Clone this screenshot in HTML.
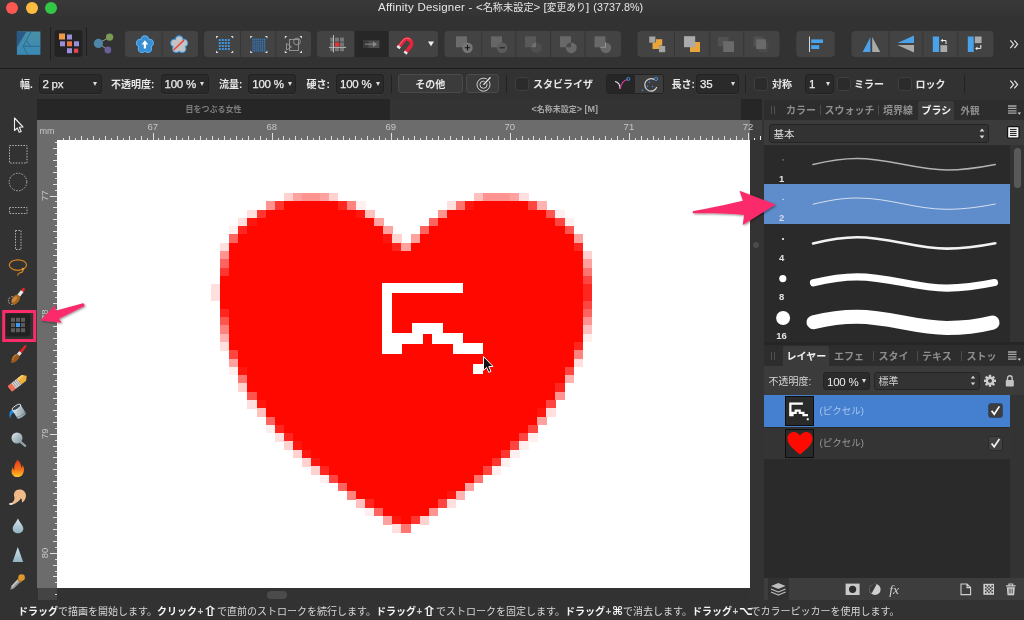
<!DOCTYPE html>
<html lang="ja">
<head>
<meta charset="utf-8">
<title>Affinity Designer</title>
<style>
*{box-sizing:border-box;margin:0;padding:0}
html,body{width:1024px;height:620px;overflow:hidden;background:#323232}
body{position:relative;font-family:"Liberation Sans","Noto Sans CJK JP","DejaVu Sans",sans-serif;color:#e4e4e4;font-size:10px}
.a{position:absolute}
.t{position:absolute;white-space:nowrap;line-height:1}
#titlebar{left:0;top:0;width:1024px;height:17px;background:linear-gradient(#393939,#333)}
#toolbar{left:0;top:17px;width:1024px;height:51px;background:#323232}
#tbline{left:0;top:68px;width:1024px;height:1px;background:#1b1b1b}
#ctx{left:0;top:69px;width:1024px;height:30px;background:#323232}
.grp{position:absolute;top:31px;height:26px;background:#434343;border-radius:4px}
.dv{position:absolute;top:31px;width:1px;height:26px;background:#383838}
.combo{position:absolute;top:74px;height:20px;background:#2a2a2a;border:1px solid #222;border-radius:3px;box-shadow:0 1px 0 #3a3a3a}
.combo span{-webkit-text-stroke:0.25px #ececec;position:absolute;left:3px;top:4.3px;font-size:11.5px;letter-spacing:-0.25px;color:#ececec;line-height:1;white-space:nowrap}
.combo i{position:absolute;right:3.5px;top:7px;width:0;height:0;border-left:2.5px solid transparent;border-right:2.5px solid transparent;border-top:4px solid #ddd}
.lbl{position:absolute;top:79.6px;font-size:10px;font-weight:bold;color:#e8e8e8;line-height:1;white-space:nowrap}
.chk{position:absolute;top:77px;width:14px;height:14px;background:#2b2b2b;border:1px solid #3e3e3e;border-radius:3px}
.btn{position:absolute;top:74px;height:19px;background:#3b3b3b;border:1px solid #4a4a4a;border-radius:3px}
.vsep{position:absolute;top:75px;width:1px;height:18px;background:#222}
#status b{color:#f4f4f4}
#status .k{display:inline-block;text-align:center;font-size:12px;line-height:10px;vertical-align:baseline;font-family:"DejaVu Sans",sans-serif}
#status .pl{display:inline-block;width:7px;text-align:center;color:#cfcfcf}
.ptab{position:absolute;font-size:10px;font-weight:bold;color:#8e8e8e;line-height:1;white-space:nowrap}
</style>
</head>
<body>
<div id="wrap" style="position:absolute;left:0;top:0;width:1024px;height:620px;will-change:transform">
<!-- title bar -->
<div class="a" id="titlebar"></div>
<div class="a" style="left:6px;top:2px;width:12px;height:12px;border-radius:50%;background:#fc5753"></div>
<div class="a" style="left:25.5px;top:2px;width:12px;height:12px;border-radius:50%;background:#fdbc40"></div>
<div class="a" style="left:45px;top:2px;width:12px;height:12px;border-radius:50%;background:#33c748"></div>
<div class="t" id="title" style="left:378px;top:2px;font-size:11.5px;color:#e6e6e6"><span id="t1" style="letter-spacing:0.21px">Affinity Designer - </span><span id="t2">&lt;<span style="font-size:10.2px">名称未設定</span>&gt; </span><span id="t3">[<span style="font-size:9.8px">変更あり</span>] </span><span id="t4" style="font-size:10.8px;margin-left:1px">(3737.8%)</span></div>

<!-- main toolbar -->
<div class="a" id="toolbar"></div>
<div class="a" id="tbline"></div>
<!-- persona group -->
<svg class="a" style="left:0;top:17px" width="1024" height="52" viewBox="0 17 1024 52">
<defs>
<linearGradient id="lg1" x1="0" y1="0" x2="0" y2="1"><stop offset="0" stop-color="#4a8fa6"/><stop offset="1" stop-color="#3889b6"/></linearGradient>
</defs>
<!-- affinity logo -->
<rect x="16.9" y="31.5" width="23.5" height="23.3" fill="url(#lg1)"/>
<polygon points="16.9,31.5 26.5,31.5 16.9,47.4" fill="#2a5a88"/>
<path d="M31.2,31.5 L23.2,46.3 L27.6,54.8 M23.2,46.3 L40.4,46.3 M26.5,40.6 L30.6,46.3" stroke="#2a668e" stroke-width="0.9" fill="none"/>
<rect x="50" y="27" width="1" height="33" fill="#1f1f1f"/>
<rect x="54.5" y="30" width="28" height="27" rx="3.5" fill="#232323"/>
<rect x="59" y="33.5" width="6" height="6" fill="#f19a45"/>
<rect x="67" y="34.5" width="5" height="5" fill="#9a8fd8"/>
<rect x="60" y="41.3" width="5" height="5" fill="#9a8fd8"/>
<rect x="67" y="41.3" width="5" height="5" fill="#f0743c"/>
<rect x="74" y="41.3" width="5" height="5" fill="#9a8fd8"/>
<rect x="67" y="48.2" width="5" height="5" fill="#9a8fd8"/>
<rect x="74" y="48.6" width="4.2" height="4.2" fill="#e8474e"/>
<rect x="86" y="27" width="1" height="29" fill="#1f1f1f"/>
<!-- share -->
<path d="M98.4 43.4 L109.6 37.1 M98.4 43.4 L107.9 50" stroke="#9a9a9a" stroke-width="1"/>
<circle cx="98.4" cy="43.4" r="4.6" fill="#4d85a8"/>
<circle cx="109.6" cy="37.1" r="3.7" fill="#7a9a55"/>
<circle cx="107.9" cy="50" r="3.4" fill="#6b5f9a"/>
<!-- groups -->
<g fill="#434343">
<rect x="125" y="31" width="73" height="26" rx="4"/>
<rect x="204" y="31" width="107" height="26" rx="4"/>
<rect x="317" y="31" width="121" height="26" rx="4"/>
<rect x="444.5" y="31" width="176.5" height="26" rx="4"/>
<rect x="637.5" y="31" width="142" height="26" rx="4"/>
<rect x="796.3" y="31" width="38.4" height="26" rx="4"/>
<rect x="851.5" y="31" width="142" height="26" rx="4"/>
</g>
<rect x="354.4" y="31" width="34.4" height="26" fill="#272727"/>
<g fill="#363636">
<rect x="161.5" y="31" width="1" height="26"/>
<rect x="240" y="31" width="1" height="26"/><rect x="275.2" y="31" width="1" height="26"/>
<rect x="481.2" y="31" width="1" height="26"/><rect x="515.2" y="31" width="1" height="26"/><rect x="550.2" y="31" width="1" height="26"/><rect x="584.4" y="31" width="1" height="26"/>
<rect x="674" y="31" width="1" height="26"/><rect x="709.3" y="31" width="1" height="26"/><rect x="743.2" y="31" width="1" height="26"/>
<rect x="888.4" y="31" width="1" height="26"/><rect x="922.3" y="31" width="1" height="26"/><rect x="957.2" y="31" width="1" height="26"/>
</g>
<!-- flower icons -->
<g fill="#5aaeee"><circle cx="144.90" cy="39.60" r="4.3"/><circle cx="149.66" cy="43.05" r="4.3"/><circle cx="147.84" cy="48.65" r="4.3"/><circle cx="141.96" cy="48.65" r="4.3"/><circle cx="140.14" cy="43.05" r="4.3"/></g>
<g fill="#3a8ed2"><circle cx="144.90" cy="39.60" r="3.2"/><circle cx="149.66" cy="43.05" r="3.2"/><circle cx="147.84" cy="48.65" r="3.2"/><circle cx="141.96" cy="48.65" r="3.2"/><circle cx="140.14" cy="43.05" r="3.2"/><circle cx="144.90" cy="44.60" r="5.2"/></g>
<path d="M144.9,40.2 L148.2,44.6 L146,44.6 L146,48.6 L143.8,48.6 L143.8,44.6 L141.6,44.6 Z" fill="#fff"/>
<g fill="#3d94dc"><circle cx="179.20" cy="39.60" r="4.3"/><circle cx="183.96" cy="43.05" r="4.3"/><circle cx="182.14" cy="48.65" r="4.3"/><circle cx="176.26" cy="48.65" r="4.3"/><circle cx="174.44" cy="43.05" r="4.3"/></g>
<g fill="#c4c4c4"><circle cx="179.20" cy="39.60" r="3.2"/><circle cx="183.96" cy="43.05" r="3.2"/><circle cx="182.14" cy="48.65" r="3.2"/><circle cx="176.26" cy="48.65" r="3.2"/><circle cx="174.44" cy="43.05" r="3.2"/><circle cx="179.20" cy="44.60" r="5.2"/></g>
<path d="M173.4,50.3 L184,40.1" stroke="#e8483c" stroke-width="1.5"/>
<!-- grid icons -->
<path fill="#e2e2e2" d="M216.0,36 h2.5 l-2.5,2.5z M233.2,36 v2.5 l-2.5,-2.5z M216.0,53 v-2.5 l2.5,2.5z M233.2,53 h-2.5 l2.5,-2.5z"/>
<g fill="#3f93df">
<rect x="218.8" y="39" width="2" height="2"/><rect x="221.8" y="39" width="2" height="2"/><rect x="224.8" y="39" width="2" height="2"/><rect x="227.8" y="39" width="2" height="2"/>
<rect x="218.8" y="42" width="2" height="2"/><rect x="221.8" y="42" width="2" height="2"/><rect x="224.8" y="42" width="2" height="2"/><rect x="227.8" y="42" width="2" height="2"/>
<rect x="218.8" y="45" width="2" height="2"/><rect x="221.8" y="45" width="2" height="2"/><rect x="224.8" y="45" width="2" height="2"/><rect x="227.8" y="45" width="2" height="2"/>
<rect x="218.8" y="48" width="2" height="2"/><rect x="221.8" y="48" width="2" height="2"/><rect x="224.8" y="48" width="2" height="2"/><rect x="227.8" y="48" width="2" height="2"/>
</g>
<path fill="#e2e2e2" d="M250.2,36 h2.5 l-2.5,2.5z M267.4,36 v2.5 l-2.5,-2.5z M250.2,53 v-2.5 l2.5,2.5z M267.4,53 h-2.5 l2.5,-2.5z"/>
<rect x="252" y="38.2" width="13.4" height="13.2" fill="#37414b"/>
<g fill="#3f8cd6"><rect x="252.4" y="38.6" width="1.2" height="1.2"/><rect x="252.4" y="40.6" width="1.2" height="1.2"/><rect x="252.4" y="42.5" width="1.2" height="1.2"/><rect x="252.4" y="44.5" width="1.2" height="1.2"/><rect x="252.4" y="46.4" width="1.2" height="1.2"/><rect x="252.4" y="48.4" width="1.2" height="1.2"/><rect x="252.4" y="50.3" width="1.2" height="1.2"/><rect x="254.3" y="38.6" width="1.2" height="1.2"/><rect x="254.3" y="40.6" width="1.2" height="1.2"/><rect x="254.3" y="42.5" width="1.2" height="1.2"/><rect x="254.3" y="44.5" width="1.2" height="1.2"/><rect x="254.3" y="46.4" width="1.2" height="1.2"/><rect x="254.3" y="48.4" width="1.2" height="1.2"/><rect x="254.3" y="50.3" width="1.2" height="1.2"/><rect x="256.3" y="38.6" width="1.2" height="1.2"/><rect x="256.3" y="40.6" width="1.2" height="1.2"/><rect x="256.3" y="42.5" width="1.2" height="1.2"/><rect x="256.3" y="44.5" width="1.2" height="1.2"/><rect x="256.3" y="46.4" width="1.2" height="1.2"/><rect x="256.3" y="48.4" width="1.2" height="1.2"/><rect x="256.3" y="50.3" width="1.2" height="1.2"/><rect x="258.2" y="38.6" width="1.2" height="1.2"/><rect x="258.2" y="40.6" width="1.2" height="1.2"/><rect x="258.2" y="42.5" width="1.2" height="1.2"/><rect x="258.2" y="44.5" width="1.2" height="1.2"/><rect x="258.2" y="46.4" width="1.2" height="1.2"/><rect x="258.2" y="48.4" width="1.2" height="1.2"/><rect x="258.2" y="50.3" width="1.2" height="1.2"/><rect x="260.2" y="38.6" width="1.2" height="1.2"/><rect x="260.2" y="40.6" width="1.2" height="1.2"/><rect x="260.2" y="42.5" width="1.2" height="1.2"/><rect x="260.2" y="44.5" width="1.2" height="1.2"/><rect x="260.2" y="46.4" width="1.2" height="1.2"/><rect x="260.2" y="48.4" width="1.2" height="1.2"/><rect x="260.2" y="50.3" width="1.2" height="1.2"/><rect x="262.1" y="38.6" width="1.2" height="1.2"/><rect x="262.1" y="40.6" width="1.2" height="1.2"/><rect x="262.1" y="42.5" width="1.2" height="1.2"/><rect x="262.1" y="44.5" width="1.2" height="1.2"/><rect x="262.1" y="46.4" width="1.2" height="1.2"/><rect x="262.1" y="48.4" width="1.2" height="1.2"/><rect x="262.1" y="50.3" width="1.2" height="1.2"/><rect x="264.1" y="38.6" width="1.2" height="1.2"/><rect x="264.1" y="40.6" width="1.2" height="1.2"/><rect x="264.1" y="42.5" width="1.2" height="1.2"/><rect x="264.1" y="44.5" width="1.2" height="1.2"/><rect x="264.1" y="46.4" width="1.2" height="1.2"/><rect x="264.1" y="48.4" width="1.2" height="1.2"/><rect x="264.1" y="50.3" width="1.2" height="1.2"/></g>
<path fill="#e2e2e2" d="M284.8,36 h2.5 l-2.5,2.5z M302.0,36 v2.5 l-2.5,-2.5z M284.8,53 v-2.5 l2.5,2.5z M302.0,53 h-2.5 l2.5,-2.5z"/>
<g fill="none" stroke="#9a9a9a" stroke-width="0.9">
<rect x="289.5" y="39.5" width="9" height="11"/>
<circle cx="297" cy="41.5" r="3.4"/>
<path d="M286.5,43.5 v6.5 l5,-3.2z"/>
</g>
<!-- snapping -->
<g fill="#767676">
<rect x="330.3" y="37.6" width="3" height="4"/><rect x="335" y="37.6" width="4" height="4"/><rect x="340" y="37.6" width="4" height="4"/>
<rect x="330.3" y="42.5" width="3" height="4"/><rect x="340" y="42.5" width="4" height="4"/>
<rect x="330.3" y="47.8" width="3" height="3.4"/><rect x="335" y="47.8" width="4" height="3.4"/><rect x="340" y="47.8" width="4" height="3.4"/>
</g>
<rect x="335" y="42.5" width="4.2" height="4" fill="#ee3030"/>
<rect x="333.1" y="35" width="0.8" height="17.5" fill="#d8d8d8"/>
<rect x="329" y="46.9" width="17" height="0.8" fill="#d8d8d8"/>
<!-- force pixel alignment (active, dark) -->
<rect x="363" y="40.4" width="16.4" height="7.6" fill="#4e4e4e"/>
<rect x="363" y="40.4" width="5.5" height="7.6" fill="#3a3a3a"/>
<path d="M365,44.2 h9" stroke="#8a8a8a" stroke-width="1"/>
<path d="M373,41.5 l4,2.7 l-4,2.7z" fill="#8a8a8a"/>
<!-- magnet -->
<g transform="translate(406.5,44.3) rotate(38)">
<path d="M-6.3,7.5 L-6.3,-1 A6.3,6.3 0 0 1 6.3,-1 L6.3,7.5 L2.6,7.5 L2.6,-1 A2.6,2.6 0 0 0 -2.6,-1 L-2.6,7.5 Z" fill="#e8243c"/>
<path d="M-5.2,7.5 L-5.2,-1 A5.2,5.2 0 0 1 0,-6.2" stroke="#f5687a" stroke-width="1" fill="none"/>
<rect x="-6.3" y="5.8" width="3.7" height="2.4" fill="#e6e6e6"/>
<rect x="2.6" y="5.8" width="3.7" height="2.4" fill="#e6e6e6"/>
</g>
<path d="M428,41.6 h6 l-3,4.6z" fill="#f0f0f0"/>
<!-- boolean ops -->
<g>
<rect x="456" y="36.3" width="11" height="11" fill="#6b6b6b"/>
<circle cx="467.5" cy="47.8" r="5.2" fill="#767676"/>
<path d="M464.8,47.8 h5.4 M467.5,45.1 v5.4" stroke="#151515" stroke-width="1.1"/>
<rect x="491" y="36.3" width="11" height="11" fill="#666"/>
<circle cx="502.2" cy="47.8" r="5.2" fill="#5c5c5c"/>
<path d="M499.6,47.8 h5.2" stroke="#1c1c1c" stroke-width="1.1"/>
<rect x="525" y="36.3" width="11" height="11" fill="#595959"/>
<circle cx="536.5" cy="47.8" r="5.4" fill="#4e4e4e"/>
<path d="M531.2,47.3 A5.4,5.4 0 0 1 536,42.4 L536,47.3z" fill="#707070"/>
<rect x="560" y="36.3" width="11" height="11" fill="#686868"/>
<circle cx="571.3" cy="47.8" r="5.4" fill="#686868"/>
<path d="M566,47.3 A5.4,5.4 0 0 1 571,42.4 L571,47.3z" fill="#4a4a4a"/>
<rect x="594.5" y="36.3" width="11" height="11" fill="#686868"/>
<circle cx="605.8" cy="47.8" r="5.4" fill="#686868"/>
<path d="M600.4,47.3 L605.5,47.3 L605.5,42.4" fill="none" stroke="#a8a8a8" stroke-width="0.7"/>
</g>
<!-- arrange -->
<g>
<rect x="649.2" y="36.5" width="6.2" height="6.2" fill="#a4a4a4"/>
<rect x="652.5" y="42.5" width="6.5" height="6.5" fill="#e8a53c"/>
<rect x="656" y="39.2" width="6.2" height="6.5" fill="#e8a53c"/>
<rect x="659" y="46" width="6.2" height="6.2" fill="#a4a4a4"/>
<rect x="690" y="42" width="10" height="10" fill="#e8a53c"/>
<rect x="684" y="36.2" width="11.2" height="11" fill="#ababab"/>
<rect x="718" y="37" width="10.5" height="9.5" fill="#515151"/>
<rect x="723.2" y="41.2" width="10.8" height="10.8" fill="#6a6a6a"/>
<rect x="753.4" y="36.6" width="10" height="10" fill="#505050"/>
<rect x="758.5" y="42" width="10" height="10" fill="#4a4a4a"/>
<rect x="756.2" y="39.3" width="9.8" height="9.8" fill="#6a6a6a"/>
</g>
<!-- align -->
<rect x="809" y="36.5" width="1" height="15.5" fill="#d8d8d8"/>
<rect x="811.2" y="39.4" width="11.8" height="3.6" fill="#4aa3ea"/>
<rect x="811.2" y="45.2" width="8" height="3.8" fill="#4aa3ea"/>
<!-- flip / rotate -->
<path d="M862.7,52 L870.4,37 L870.4,52z" fill="#4aa3ea"/>
<path d="M872.2,37 L872.2,52 L880.2,52z" fill="#aaa"/>
<path d="M897.4,42.9 L914,35.6 L914,42.9z" fill="#4aa3ea"/>
<path d="M897.4,45.1 L914,45.1 L914,52.6z" fill="#aaa"/>
<rect x="932.8" y="36.5" width="6.3" height="15.5" fill="#4aa3ea"/>
<rect x="940.4" y="45.2" width="6.8" height="6.8" fill="#aaa"/>
<path d="M942,40.5 h4 v3.5" stroke="#f0f0f0" stroke-width="1" fill="none"/>
<path d="M940.6,40.5 l2.2,-1.8 v3.6z" fill="#f0f0f0"/>
<rect x="967.8" y="36.5" width="5.9" height="15.5" fill="#4aa3ea"/>
<rect x="974.8" y="36.5" width="6.8" height="6.6" fill="#aaa"/>
<path d="M980.8,45 v3.4 h-4" stroke="#f0f0f0" stroke-width="1" fill="none"/>
<path d="M975.2,48.4 l2.2,-1.8 v3.6z" fill="#f0f0f0"/>
<path d="M1010.3,40.3 l3.3,3.9 l-3.3,3.9 M1014.3,40.3 l3.3,3.9 l-3.3,3.9" stroke="#e0e0e0" stroke-width="1.2" fill="none"/>
</svg>


<!-- context toolbar -->
<div class="a" id="ctx"></div>
<div class="lbl" style="left:20px">幅.</div>
<div class="combo" style="left:38.5px;width:63px"><span>2 px</span><i></i></div>
<div class="lbl" style="left:111px">不透明度:</div>
<div class="combo" style="left:160.5px;width:48px"><span>100 %</span><i></i></div>
<div class="lbl" style="left:219px">流量:</div>
<div class="combo" style="left:248.3px;width:48px"><span>100 %</span><i></i></div>
<div class="lbl" style="left:306.5px">硬さ:</div>
<div class="combo" style="left:336px;width:48px"><span>100 %</span><i></i></div>
<div class="vsep" style="left:391px"></div>
<div class="btn" style="left:398px;width:64.5px"><div class="t" style="left:0;width:100%;text-align:center;top:5px;font-size:10px;font-weight:bold;color:#e8e8e8">その他</div></div>
<div class="btn" style="left:465.5px;width:33px">
<svg class="a" style="left:8px;top:0px" width="18" height="18" viewBox="0 0 18 18"><circle cx="8.5" cy="9.7" r="6.5" fill="none" stroke="#cfcfcf" stroke-width="1"/><circle cx="8.5" cy="9.7" r="3.6" fill="none" stroke="#cfcfcf" stroke-width="1"/><path d="M8.5,9.7 L15.5,2.2" stroke="#3b3b3b" stroke-width="3"/><path d="M8.5,9.7 L15.5,2.2" stroke="#e4e4e4" stroke-width="1.3"/></svg>
</div>
<div class="vsep" style="left:506px"></div>
<div class="chk" style="left:514.5px"></div>
<div class="lbl" style="left:533px">スタビライザ</div>
<div class="a" style="left:606px;top:74px;width:58px;height:19.5px;background:#3c3c3c;border:1px solid #242424;border-radius:3px"></div>
<div class="a" style="left:607px;top:75px;width:28px;height:17.5px;background:#262626;border-radius:2px 0 0 2px"></div>
<svg class="a" style="left:606px;top:74px" width="58" height="20" viewBox="0 0 58 20">
<path d="M9,7.5 C12.5,8 14,11 14.3,15" stroke="#e8e8e8" stroke-width="1.2" fill="none"/>
<path d="M14.3,15 C14.8,10 17,6.5 21.5,5.5" stroke="#e63aa8" stroke-width="1.2" fill="none"/>
<circle cx="22.3" cy="5" r="1.5" fill="none" stroke="#3f97e6" stroke-width="0.9"/>
<path d="M48.5,5.8 A6.2,6.2 0 1 0 50.8,13" stroke="#d0d0d0" stroke-width="1.2" fill="none"/>
<circle cx="50" cy="5" r="1.6" fill="none" stroke="#3f97e6" stroke-width="0.9"/>
<circle cx="43.5" cy="8.2" r="0.8" fill="#3f97e6"/><circle cx="41.5" cy="12.2" r="0.8" fill="#3f97e6"/><circle cx="46.5" cy="12.5" r="0.8" fill="#3f97e6"/><circle cx="36.5" cy="16.2" r="0.8" fill="#3f97e6"/>
</svg>
<div class="lbl" style="left:671.5px">長さ:</div>
<div class="combo" style="left:696px;width:43px"><span>35</span><i></i></div>
<div class="vsep" style="left:745px"></div>
<div class="chk" style="left:754px"></div>
<div class="lbl" style="left:772px">対称</div>
<div class="combo" style="left:805px;width:29px"><span>1</span><i></i></div>
<div class="chk" style="left:837px"></div>
<div class="lbl" style="left:854px">ミラー</div>
<div class="chk" style="left:898px"></div>
<div class="lbl" style="left:915.5px">ロック</div>
<div class="vsep" style="left:964px"></div>
<svg class="a" style="left:1008px;top:79px" width="12" height="12" viewBox="0 0 12 12"><path d="M2.3,1.6 l3.3,3.9 l-3.3,3.9 M6.3,1.6 l3.3,3.9 l-3.3,3.9" stroke="#e0e0e0" stroke-width="1.2" fill="none"/></svg>


<!-- document tabs -->
<div class="a" style="left:37px;top:99px;width:353px;height:21px;background:#262626"></div>
<div class="a" style="left:390px;top:99px;width:351px;height:21px;background:#333"></div>
<div class="a" style="left:741px;top:99px;width:21px;height:21px;background:#262626"></div>
<div class="t" style="left:185.5px;top:105.5px;font-size:8px;font-weight:bold;color:#7e7e7e">目をつぶる女性</div>
<div class="t" style="left:531.5px;top:104.5px;font-size:8px;font-weight:bold;color:#a8a8a8"><span style="font-size:9px">&lt;</span>名称未設定<span style="font-size:9px">&gt; [M]</span></div>

<!-- left tools -->
<div class="a" style="left:0;top:99px;width:37px;height:501px;background:#323232"></div>
<svg class="a" style="left:0;top:99px" width="37" height="501" viewBox="0 99 37 501">
<defs>
<linearGradient id="gsil" x1="0" y1="0" x2="1" y2="1"><stop offset="0" stop-color="#dfe8ec"/><stop offset="1" stop-color="#7f949c"/></linearGradient>
<linearGradient id="gdrop" x1="0" y1="0" x2="0" y2="1"><stop offset="0" stop-color="#d6e6ec"/><stop offset="1" stop-color="#8fb2c0"/></linearGradient>
<linearGradient id="gfl" x1="0" y1="0" x2="0" y2="1"><stop offset="0" stop-color="#e8391c"/><stop offset="0.55" stop-color="#f5701a"/><stop offset="1" stop-color="#fdc92a"/></linearGradient>
</defs>
<!-- move tool -->
<path d="M14.5,118 L14.5,130.5 L17.3,128 L19.2,132.3 L21.2,131.4 L19.3,127.2 L23,127 Z" fill="#2f2f2f" stroke="#ededed" stroke-width="1.1" stroke-linejoin="round"/>
<!-- marquees -->
<g fill="none" stroke="#b4b4b4" stroke-width="1" stroke-dasharray="1.5 1.3">
<rect x="9.5" y="145.5" width="17.5" height="17.5"/>
<circle cx="18" cy="182" r="8.8"/>
<rect x="9.5" y="207.5" width="17.5" height="6"/>
<rect x="15.5" y="230.5" width="5.5" height="19"/>
</g>
<!-- lasso -->
<ellipse cx="17.9" cy="265.1" rx="8.6" ry="5.3" fill="none" stroke="#d98420" stroke-width="1.2"/>
<path d="M23,268.8 C24,272 21,272.5 19.5,273 C18.3,273.4 17.8,274.4 17.5,275.6" fill="none" stroke="#d98420" stroke-width="1.1"/>
<circle cx="22.8" cy="268.8" r="1.1" fill="#f0a838"/>
<!-- selection brush -->
<circle cx="12.3" cy="300.6" r="3.9" fill="none" stroke="#d0d0d0" stroke-width="0.9" stroke-dasharray="1.6 1.2"/>
<g transform="translate(17.6,297) rotate(-52)">
<ellipse cx="-3.2" cy="0" rx="5.6" ry="3.6" fill="#a8671f"/>
<ellipse cx="-3.6" cy="-1" rx="3.6" ry="1.6" fill="#c98a3a"/>
<rect x="2" y="-1.7" width="5.6" height="3.4" fill="#e6e6e6"/>
<path d="M7.6,-1.7 L11,-1.2 L11,1.2 L7.6,1.7z" fill="#e8242c"/>
</g>
<!-- pixel tool (active) -->
<rect x="5.3" y="313.4" width="25" height="23" rx="3" fill="#222"/>
<g fill="#5c5c5c">
<rect x="11" y="317.8" width="4" height="4"/><rect x="16" y="317.8" width="4" height="4"/><rect x="21" y="317.8" width="4" height="4"/>
<rect x="11" y="323" width="4" height="4"/><rect x="21" y="323" width="4" height="4"/>
<rect x="11" y="328.2" width="4" height="4"/><rect x="16" y="328.2" width="4" height="4"/><rect x="21" y="328.2" width="4" height="4"/>
</g>
<rect x="16" y="323" width="4" height="4" fill="#3b9cf5"/>
<!-- paint brush -->
<g transform="translate(18.5,354.5) rotate(-50)">
<path d="M-11,0 C-8,-3.6 -3,-3.4 -0.5,-1.6 L-0.5,1.6 C-3,3.6 -8,3 -11,0z" fill="#9c5a1c"/>
<path d="M-8,-1 C-6,-2.4 -3,-2.4 -1,-1.2" stroke="#c4843a" stroke-width="1" fill="none"/>
<rect x="-0.5" y="-1.7" width="3.8" height="3.4" fill="#e2e2e2"/>
<path d="M3.3,-1.7 L11.5,-1 L12.2,0 L11.5,1 L3.3,1.7z" fill="#e3222a"/>
</g>
<!-- eraser -->
<g transform="translate(18,382.5) rotate(-38)">
<rect x="-10.5" y="-3.6" width="5.5" height="7.2" rx="1" fill="#f0705c"/>
<rect x="-5.5" y="-3.6" width="7" height="7.2" fill="#d8d8d8"/>
<path d="M-4,-3.6v7.2 M-2,-3.6v7.2 M0,-3.6v7.2" stroke="#8e8e8e" stroke-width="0.8"/>
<path d="M1.5,-3.6 L7.5,-3.6 L11,0 L7.5,3.6 L1.5,3.6z" fill="#f0b040"/>
<path d="M1.5,-3.6 L7.5,-3.6 L9,-2 L1.5,-1z" fill="#f8cf70"/>
</g>
<!-- flood fill bucket -->
<path d="M13.6,409.5 C9.5,410 8.6,414 10.2,418.6 C11,415 11.6,413 14.6,412.4z" fill="#1f8fe6"/>
<g transform="translate(18.8,411.2) rotate(-32)">
<path d="M-5,-4.5 L5,-4.5 L5,5 A5,1.8 0 0 1 -5,5z" fill="url(#gsil)"/>
<ellipse cx="0" cy="-4.5" rx="5" ry="1.9" fill="#39434a" stroke="#e8eef0" stroke-width="0.8"/>
<path d="M-5,3.2 A5,1.8 0 0 0 5,3.2" stroke="#6a7c84" stroke-width="0.7" fill="none"/>
</g>
<!-- zoom -->
<path d="M20.6,441.8 L25.2,445.8" stroke="#8ea2aa" stroke-width="2.2" stroke-linecap="round"/>
<circle cx="17" cy="438" r="5.5" fill="url(#gsil)"/>
<!-- burn (flame) -->
<path d="M17.6,459.8 C20.5,462.5 21.5,465.5 21.3,467.8 C22,467.2 22.6,466 22.7,465 C24.6,468 24.6,472 22.2,475 C20.5,477.2 16.5,477.8 14,476.2 C11,474.2 10.8,470 13,467 C13,468.5 13.5,469.5 14.3,470 C13.8,466 15.2,462.5 17.6,459.8z" fill="url(#gfl)"/>
<!-- smudge -->
<path d="M9.2,503.6 C13.5,502.8 15.2,500 14.2,496.2 C13,492 16.5,489 20.5,489.6 C24.5,490.2 27,494 25.6,498 C24.8,500.4 23.4,502 21.8,502.4 C22.2,500.6 22,499 20.8,498.2 C19.4,501.2 15,504.6 9.6,504.8z" fill="#f2bb8a"/>
<path d="M9.2,503.6 L12.5,503 L12.5,504.6 L9.6,504.8z" fill="#eee"/>
<path d="M15,493 l1,1 m1.4,-2.2 l1,1 m-2.8,3 l1,1 m1.6,-2.6 l1,1 m1.2,-3 l1,1" stroke="#d89860" stroke-width="0.7"/>
<!-- blur drop -->
<path d="M17.9,518.4 C19.5,522 23.3,525.4 23.3,528.4 C23.3,531.2 21,533.3 18,533.3 C15,533.3 12.7,531.2 12.7,528.4 C12.7,525.4 16.4,522 17.9,518.4z" fill="url(#gdrop)"/>
<!-- sharpen -->
<path d="M17.8,547 L23.2,562 L12.6,562z" fill="url(#gdrop)"/>
<!-- colour picker -->
<path d="M10.2,589.8 L11.4,586 L17.6,579.6 L20.2,582.2 L13.8,588.4z" fill="#9a9a9a"/>
<path d="M11.4,586 L17.6,579.6 L18.8,580.8 L12.2,587.4z" fill="#c8c8c8"/>
<path d="M17.2,579.4 L20.6,582.8 L22,581.4 L18.6,578z" fill="#b87c1c"/>
<circle cx="21.6" cy="577.6" r="3.3" fill="#dc9a2c"/>
</svg>


<!-- canvas area -->
<div class="a" style="left:37px;top:120px;width:713px;height:20px;background:#6c6c6c"></div>
<div class="a" style="left:37px;top:140px;width:20px;height:448px;background:#6c6c6c"></div>
<div class="a" style="left:57px;top:140px;width:693px;height:448px;background:#fff"></div>
<div class="a" style="left:750px;top:120px;width:14px;height:480px;background:#333"></div>
<div class="a" style="left:750px;top:120px;width:12px;height:20px;background:#3e3e3e"></div>
<div class="a" style="left:762px;top:99px;width:2px;height:46px;background:#2a2a2a"></div>
<div class="a" style="left:37px;top:588px;width:713px;height:12px;background:#323232"></div>
<div class="a" style="left:37.5px;top:588px;width:19.5px;height:12px;background:#444"></div><div class="a" style="left:55px;top:594px;width:2px;height:1px;background:#ddd"></div>
<div class="a" style="left:266.7px;top:591px;width:20.6px;height:7.6px;border-radius:3.8px;background:#4b4b4b"></div>
<div class="a" style="left:753px;top:242px;width:6px;height:6px;border-radius:3px;background:#4a4a4a"></div>
<svg class="a" style="left:0;top:0" width="1024" height="620" viewBox="0 0 1024 620">
<g shape-rendering="crispEdges">
<rect x="283.68" y="193.00" width="9.36" height="8.58" fill="#ffd1cf"/>
<rect x="292.74" y="193.00" width="9.36" height="8.58" fill="#ffa29f"/>
<rect x="301.80" y="193.00" width="18.42" height="8.58" fill="#ff938f"/>
<rect x="319.92" y="193.00" width="9.36" height="8.58" fill="#ffa29f"/>
<rect x="328.98" y="193.00" width="9.36" height="8.58" fill="#ffd1cf"/>
<rect x="464.88" y="193.00" width="9.36" height="8.58" fill="#ffffff"/>
<rect x="473.94" y="193.00" width="9.36" height="8.58" fill="#ffc1bf"/>
<rect x="483.00" y="193.00" width="27.48" height="8.58" fill="#ff938f"/>
<rect x="510.18" y="193.00" width="9.36" height="8.58" fill="#ffa29f"/>
<rect x="519.24" y="193.00" width="9.36" height="8.58" fill="#ffe0df"/>
<rect x="256.50" y="201.28" width="9.36" height="8.58" fill="#ffffff"/>
<rect x="265.56" y="201.28" width="9.36" height="8.58" fill="#ff938f"/>
<rect x="274.62" y="201.28" width="9.36" height="8.58" fill="#fe362f"/>
<rect x="283.68" y="201.28" width="54.66" height="8.58" fill="#fe0800"/>
<rect x="338.04" y="201.28" width="9.36" height="8.58" fill="#fe261f"/>
<rect x="347.10" y="201.28" width="9.36" height="8.58" fill="#fe837f"/>
<rect x="356.16" y="201.28" width="9.36" height="8.58" fill="#fff0ef"/>
<rect x="446.76" y="201.28" width="9.36" height="8.58" fill="#ffe0df"/>
<rect x="455.82" y="201.28" width="9.36" height="8.58" fill="#fe746f"/>
<rect x="464.88" y="201.28" width="9.36" height="8.58" fill="#fe170f"/>
<rect x="473.94" y="201.28" width="54.66" height="8.58" fill="#fe0800"/>
<rect x="528.30" y="201.28" width="9.36" height="8.58" fill="#fe453f"/>
<rect x="537.36" y="201.28" width="9.36" height="8.58" fill="#ffb2af"/>
<rect x="247.44" y="209.56" width="9.36" height="8.58" fill="#ffe0df"/>
<rect x="256.50" y="209.56" width="9.36" height="8.58" fill="#fe362f"/>
<rect x="265.56" y="209.56" width="90.90" height="8.58" fill="#fe0800"/>
<rect x="356.16" y="209.56" width="9.36" height="8.58" fill="#fe170f"/>
<rect x="365.22" y="209.56" width="9.36" height="8.58" fill="#ffc1bf"/>
<rect x="437.70" y="209.56" width="9.36" height="8.58" fill="#ff938f"/>
<rect x="446.76" y="209.56" width="99.96" height="8.58" fill="#fe0800"/>
<rect x="546.42" y="209.56" width="9.36" height="8.58" fill="#fe554f"/>
<rect x="555.48" y="209.56" width="9.36" height="8.58" fill="#fff0ef"/>
<rect x="238.38" y="217.84" width="9.36" height="8.58" fill="#ffe0df"/>
<rect x="247.44" y="217.84" width="9.36" height="8.58" fill="#fe170f"/>
<rect x="256.50" y="217.84" width="118.08" height="8.58" fill="#fe0800"/>
<rect x="374.28" y="217.84" width="9.36" height="8.58" fill="#ffa29f"/>
<rect x="428.64" y="217.84" width="9.36" height="8.58" fill="#fe645f"/>
<rect x="437.70" y="217.84" width="118.08" height="8.58" fill="#fe0800"/>
<rect x="555.48" y="217.84" width="9.36" height="8.58" fill="#fe453f"/>
<rect x="564.54" y="217.84" width="9.36" height="8.58" fill="#fff0ef"/>
<rect x="229.32" y="226.12" width="9.36" height="8.58" fill="#fff0ef"/>
<rect x="238.38" y="226.12" width="9.36" height="8.58" fill="#fe261f"/>
<rect x="247.44" y="226.12" width="136.20" height="8.58" fill="#fe0800"/>
<rect x="383.34" y="226.12" width="9.36" height="8.58" fill="#ffa29f"/>
<rect x="419.58" y="226.12" width="9.36" height="8.58" fill="#fe645f"/>
<rect x="428.64" y="226.12" width="136.20" height="8.58" fill="#fe0800"/>
<rect x="564.54" y="226.12" width="9.36" height="8.58" fill="#fe554f"/>
<rect x="229.32" y="234.40" width="9.36" height="8.58" fill="#fe645f"/>
<rect x="238.38" y="234.40" width="145.26" height="8.58" fill="#fe0800"/>
<rect x="383.34" y="234.40" width="9.36" height="8.58" fill="#fe170f"/>
<rect x="392.40" y="234.40" width="9.36" height="8.58" fill="#ffd1cf"/>
<rect x="410.52" y="234.40" width="9.36" height="8.58" fill="#ffa29f"/>
<rect x="419.58" y="234.40" width="154.32" height="8.58" fill="#fe0800"/>
<rect x="573.60" y="234.40" width="9.36" height="8.58" fill="#ffa29f"/>
<rect x="220.26" y="242.68" width="9.36" height="8.58" fill="#ffe0df"/>
<rect x="229.32" y="242.68" width="163.38" height="8.58" fill="#fe0800"/>
<rect x="392.40" y="242.68" width="9.36" height="8.58" fill="#fe261f"/>
<rect x="401.46" y="242.68" width="9.36" height="8.58" fill="#ffa29f"/>
<rect x="410.52" y="242.68" width="9.36" height="8.58" fill="#fe0800"/>
<rect x="419.58" y="242.68" width="154.32" height="8.58" fill="#fe0800"/>
<rect x="573.60" y="242.68" width="9.36" height="8.58" fill="#fe261f"/>
<rect x="220.26" y="250.96" width="9.36" height="8.58" fill="#ff938f"/>
<rect x="229.32" y="250.96" width="353.64" height="8.58" fill="#fe0800"/>
<rect x="582.66" y="250.96" width="9.36" height="8.58" fill="#ffd1cf"/>
<rect x="220.26" y="259.24" width="9.36" height="8.58" fill="#fe645f"/>
<rect x="229.32" y="259.24" width="353.64" height="8.58" fill="#fe0800"/>
<rect x="582.66" y="259.24" width="9.36" height="8.58" fill="#ffa29f"/>
<rect x="220.26" y="267.52" width="9.36" height="8.58" fill="#fe362f"/>
<rect x="229.32" y="267.52" width="353.64" height="8.58" fill="#fe0800"/>
<rect x="582.66" y="267.52" width="9.36" height="8.58" fill="#fe746f"/>
<rect x="220.26" y="275.80" width="9.36" height="8.58" fill="#fe0800"/>
<rect x="229.32" y="275.80" width="353.64" height="8.58" fill="#fe0800"/>
<rect x="582.66" y="275.80" width="9.36" height="8.58" fill="#fe453f"/>
<rect x="211.20" y="284.08" width="9.36" height="8.58" fill="#ffe0df"/>
<rect x="220.26" y="284.08" width="362.70" height="8.58" fill="#fe0800"/>
<rect x="582.66" y="284.08" width="9.36" height="8.58" fill="#fe261f"/>
<rect x="211.20" y="292.36" width="9.36" height="8.58" fill="#ffe0df"/>
<rect x="220.26" y="292.36" width="362.70" height="8.58" fill="#fe0800"/>
<rect x="582.66" y="292.36" width="9.36" height="8.58" fill="#fe261f"/>
<rect x="220.26" y="300.64" width="362.70" height="8.58" fill="#fe0800"/>
<rect x="582.66" y="300.64" width="9.36" height="8.58" fill="#fe453f"/>
<rect x="220.26" y="308.92" width="9.36" height="8.58" fill="#fe261f"/>
<rect x="229.32" y="308.92" width="353.64" height="8.58" fill="#fe0800"/>
<rect x="582.66" y="308.92" width="9.36" height="8.58" fill="#fe645f"/>
<rect x="220.26" y="317.20" width="9.36" height="8.58" fill="#fe554f"/>
<rect x="229.32" y="317.20" width="353.64" height="8.58" fill="#fe0800"/>
<rect x="582.66" y="317.20" width="9.36" height="8.58" fill="#ff938f"/>
<rect x="220.26" y="325.48" width="9.36" height="8.58" fill="#fe837f"/>
<rect x="229.32" y="325.48" width="353.64" height="8.58" fill="#fe0800"/>
<rect x="582.66" y="325.48" width="9.36" height="8.58" fill="#ffc1bf"/>
<rect x="220.26" y="333.76" width="9.36" height="8.58" fill="#ffb2af"/>
<rect x="229.32" y="333.76" width="353.64" height="8.58" fill="#fe0800"/>
<rect x="582.66" y="333.76" width="9.36" height="8.58" fill="#fff0ef"/>
<rect x="220.26" y="342.04" width="9.36" height="8.58" fill="#ffe0df"/>
<rect x="229.32" y="342.04" width="344.58" height="8.58" fill="#fe0800"/>
<rect x="573.60" y="342.04" width="9.36" height="8.58" fill="#fe261f"/>
<rect x="229.32" y="350.32" width="9.36" height="8.58" fill="#fe453f"/>
<rect x="238.38" y="350.32" width="335.52" height="8.58" fill="#fe0800"/>
<rect x="573.60" y="350.32" width="9.36" height="8.58" fill="#fe837f"/>
<rect x="229.32" y="358.60" width="9.36" height="8.58" fill="#ffa29f"/>
<rect x="238.38" y="358.60" width="335.52" height="8.58" fill="#fe0800"/>
<rect x="573.60" y="358.60" width="9.36" height="8.58" fill="#ffe0df"/>
<rect x="229.32" y="366.88" width="9.36" height="8.58" fill="#fff0ef"/>
<rect x="238.38" y="366.88" width="9.36" height="8.58" fill="#fe170f"/>
<rect x="247.44" y="366.88" width="317.40" height="8.58" fill="#fe0800"/>
<rect x="564.54" y="366.88" width="9.36" height="8.58" fill="#fe453f"/>
<rect x="238.38" y="375.16" width="9.36" height="8.58" fill="#fe746f"/>
<rect x="247.44" y="375.16" width="317.40" height="8.58" fill="#fe0800"/>
<rect x="564.54" y="375.16" width="9.36" height="8.58" fill="#ffb2af"/>
<rect x="238.38" y="383.44" width="9.36" height="8.58" fill="#ffd1cf"/>
<rect x="247.44" y="383.44" width="308.34" height="8.58" fill="#fe0800"/>
<rect x="555.48" y="383.44" width="9.36" height="8.58" fill="#fe261f"/>
<rect x="564.54" y="383.44" width="9.36" height="8.58" fill="#ffffff"/>
<rect x="247.44" y="391.72" width="9.36" height="8.58" fill="#fe554f"/>
<rect x="256.50" y="391.72" width="299.28" height="8.58" fill="#fe0800"/>
<rect x="555.48" y="391.72" width="9.36" height="8.58" fill="#ff938f"/>
<rect x="247.44" y="400.00" width="9.36" height="8.58" fill="#ffe0df"/>
<rect x="256.50" y="400.00" width="9.36" height="8.58" fill="#fe170f"/>
<rect x="265.56" y="400.00" width="281.16" height="8.58" fill="#fe0800"/>
<rect x="546.42" y="400.00" width="9.36" height="8.58" fill="#fe453f"/>
<rect x="256.50" y="408.28" width="9.36" height="8.58" fill="#ffc1bf"/>
<rect x="265.56" y="408.28" width="272.10" height="8.58" fill="#fe0800"/>
<rect x="537.36" y="408.28" width="9.36" height="8.58" fill="#fe170f"/>
<rect x="546.42" y="408.28" width="9.36" height="8.58" fill="#ffe0df"/>
<rect x="265.56" y="416.56" width="9.36" height="8.58" fill="#fe645f"/>
<rect x="274.62" y="416.56" width="263.04" height="8.58" fill="#fe0800"/>
<rect x="537.36" y="416.56" width="9.36" height="8.58" fill="#ffa29f"/>
<rect x="265.56" y="424.84" width="9.36" height="8.58" fill="#fff0ef"/>
<rect x="274.62" y="424.84" width="9.36" height="8.58" fill="#fe261f"/>
<rect x="283.68" y="424.84" width="244.92" height="8.58" fill="#fe0800"/>
<rect x="528.30" y="424.84" width="9.36" height="8.58" fill="#fe453f"/>
<rect x="274.62" y="433.12" width="9.36" height="8.58" fill="#ffe0df"/>
<rect x="283.68" y="433.12" width="9.36" height="8.58" fill="#fe261f"/>
<rect x="292.74" y="433.12" width="226.80" height="8.58" fill="#fe0800"/>
<rect x="519.24" y="433.12" width="9.36" height="8.58" fill="#fe453f"/>
<rect x="528.30" y="433.12" width="9.36" height="8.58" fill="#fff0ef"/>
<rect x="283.68" y="441.40" width="9.36" height="8.58" fill="#ffd1cf"/>
<rect x="292.74" y="441.40" width="9.36" height="8.58" fill="#fe170f"/>
<rect x="301.80" y="441.40" width="208.68" height="8.58" fill="#fe0800"/>
<rect x="510.18" y="441.40" width="9.36" height="8.58" fill="#fe453f"/>
<rect x="519.24" y="441.40" width="9.36" height="8.58" fill="#fff0ef"/>
<rect x="292.74" y="449.68" width="9.36" height="8.58" fill="#ffd1cf"/>
<rect x="301.80" y="449.68" width="9.36" height="8.58" fill="#fe170f"/>
<rect x="310.86" y="449.68" width="190.56" height="8.58" fill="#fe0800"/>
<rect x="501.12" y="449.68" width="9.36" height="8.58" fill="#fe362f"/>
<rect x="510.18" y="449.68" width="9.36" height="8.58" fill="#fff0ef"/>
<rect x="301.80" y="457.96" width="9.36" height="8.58" fill="#ffd1cf"/>
<rect x="310.86" y="457.96" width="9.36" height="8.58" fill="#fe170f"/>
<rect x="319.92" y="457.96" width="172.44" height="8.58" fill="#fe0800"/>
<rect x="492.06" y="457.96" width="9.36" height="8.58" fill="#fe362f"/>
<rect x="501.12" y="457.96" width="9.36" height="8.58" fill="#fff0ef"/>
<rect x="310.86" y="466.24" width="9.36" height="8.58" fill="#ffd1cf"/>
<rect x="319.92" y="466.24" width="9.36" height="8.58" fill="#fe261f"/>
<rect x="328.98" y="466.24" width="154.32" height="8.58" fill="#fe0800"/>
<rect x="483.00" y="466.24" width="9.36" height="8.58" fill="#fe453f"/>
<rect x="492.06" y="466.24" width="9.36" height="8.58" fill="#fff0ef"/>
<rect x="319.92" y="474.52" width="9.36" height="8.58" fill="#fff0ef"/>
<rect x="328.98" y="474.52" width="9.36" height="8.58" fill="#fe453f"/>
<rect x="338.04" y="474.52" width="136.20" height="8.58" fill="#fe0800"/>
<rect x="473.94" y="474.52" width="9.36" height="8.58" fill="#fe746f"/>
<rect x="338.04" y="482.80" width="9.36" height="8.58" fill="#fe645f"/>
<rect x="347.10" y="482.80" width="118.08" height="8.58" fill="#fe0800"/>
<rect x="464.88" y="482.80" width="9.36" height="8.58" fill="#ffa29f"/>
<rect x="347.10" y="491.08" width="9.36" height="8.58" fill="#fe837f"/>
<rect x="356.16" y="491.08" width="90.90" height="8.58" fill="#fe0800"/>
<rect x="446.76" y="491.08" width="9.36" height="8.58" fill="#fe170f"/>
<rect x="455.82" y="491.08" width="9.36" height="8.58" fill="#ffb2af"/>
<rect x="356.16" y="499.36" width="9.36" height="8.58" fill="#ffc1bf"/>
<rect x="365.22" y="499.36" width="9.36" height="8.58" fill="#fe261f"/>
<rect x="374.28" y="499.36" width="63.72" height="8.58" fill="#fe0800"/>
<rect x="437.70" y="499.36" width="9.36" height="8.58" fill="#fe453f"/>
<rect x="446.76" y="499.36" width="9.36" height="8.58" fill="#ffe0df"/>
<rect x="365.22" y="507.64" width="9.36" height="8.58" fill="#fff0ef"/>
<rect x="374.28" y="507.64" width="9.36" height="8.58" fill="#fe645f"/>
<rect x="383.34" y="507.64" width="36.54" height="8.58" fill="#fe0800"/>
<rect x="419.58" y="507.64" width="9.36" height="8.58" fill="#fe0800"/>
<rect x="428.64" y="507.64" width="9.36" height="8.58" fill="#ff938f"/>
<rect x="383.34" y="515.92" width="9.36" height="8.58" fill="#ffa29f"/>
<rect x="392.40" y="515.92" width="9.36" height="8.58" fill="#fe170f"/>
<rect x="401.46" y="515.92" width="9.36" height="8.58" fill="#fe0800"/>
<rect x="410.52" y="515.92" width="9.36" height="8.58" fill="#fe362f"/>
<rect x="419.58" y="515.92" width="9.36" height="8.58" fill="#ffd1cf"/>
<rect x="392.40" y="524.20" width="9.36" height="8.58" fill="#ffe0df"/>
<rect x="401.46" y="524.20" width="9.36" height="8.58" fill="#fe746f"/>
<rect x="410.52" y="524.20" width="9.36" height="8.58" fill="#ffffff"/>
<rect x="382.05" y="283.00" width="80.80" height="10.27" fill="#fff"/>
<rect x="382.05" y="293.07" width="10.27" height="10.27" fill="#fff"/>
<rect x="382.05" y="303.15" width="10.27" height="10.27" fill="#fff"/>
<rect x="382.05" y="313.23" width="10.27" height="10.27" fill="#fff"/>
<rect x="382.05" y="323.30" width="10.27" height="10.27" fill="#fff"/>
<rect x="412.28" y="323.30" width="30.42" height="10.27" fill="#fff"/>
<rect x="382.05" y="333.38" width="40.50" height="10.27" fill="#fff"/>
<rect x="432.43" y="333.38" width="30.42" height="10.27" fill="#fff"/>
<rect x="382.05" y="343.45" width="20.35" height="10.27" fill="#fff"/>
<rect x="452.57" y="343.45" width="30.42" height="10.27" fill="#fff"/>
<rect x="472.73" y="363.60" width="10.27" height="10.27" fill="#fff"/>
</g>
<g font-family="Liberation Sans, sans-serif" font-size="9.5" fill="#c6c6c6">
<rect x="63" y="138" width="1" height="2" fill="#e0e0e0"/>
<rect x="69" y="136" width="1" height="4" fill="#e0e0e0"/>
<rect x="75" y="138" width="1" height="2" fill="#e0e0e0"/>
<rect x="81" y="136" width="1" height="4" fill="#e0e0e0"/>
<rect x="87" y="138" width="1" height="2" fill="#e0e0e0"/>
<rect x="93" y="136" width="1" height="4" fill="#e0e0e0"/>
<rect x="99" y="138" width="1" height="2" fill="#e0e0e0"/>
<rect x="105" y="136" width="1" height="4" fill="#e0e0e0"/>
<rect x="111" y="138" width="1" height="2" fill="#e0e0e0"/>
<rect x="117" y="136" width="1" height="4" fill="#e0e0e0"/>
<rect x="123" y="138" width="1" height="2" fill="#e0e0e0"/>
<rect x="129" y="136" width="1" height="4" fill="#e0e0e0"/>
<rect x="135" y="138" width="1" height="2" fill="#e0e0e0"/>
<rect x="141" y="136" width="1" height="4" fill="#e0e0e0"/>
<rect x="147" y="138" width="1" height="2" fill="#e0e0e0"/>
<rect x="153" y="133" width="1" height="7" fill="#e0e0e0"/>
<rect x="158" y="138" width="1" height="2" fill="#e0e0e0"/>
<rect x="164" y="136" width="1" height="4" fill="#e0e0e0"/>
<rect x="170" y="138" width="1" height="2" fill="#e0e0e0"/>
<rect x="176" y="136" width="1" height="4" fill="#e0e0e0"/>
<rect x="182" y="138" width="1" height="2" fill="#e0e0e0"/>
<rect x="188" y="136" width="1" height="4" fill="#e0e0e0"/>
<rect x="194" y="138" width="1" height="2" fill="#e0e0e0"/>
<rect x="200" y="136" width="1" height="4" fill="#e0e0e0"/>
<rect x="206" y="138" width="1" height="2" fill="#e0e0e0"/>
<rect x="212" y="136" width="1" height="4" fill="#e0e0e0"/>
<rect x="218" y="138" width="1" height="2" fill="#e0e0e0"/>
<rect x="224" y="136" width="1" height="4" fill="#e0e0e0"/>
<rect x="230" y="138" width="1" height="2" fill="#e0e0e0"/>
<rect x="236" y="136" width="1" height="4" fill="#e0e0e0"/>
<rect x="242" y="138" width="1" height="2" fill="#e0e0e0"/>
<rect x="248" y="136" width="1" height="4" fill="#e0e0e0"/>
<rect x="254" y="138" width="1" height="2" fill="#e0e0e0"/>
<rect x="260" y="136" width="1" height="4" fill="#e0e0e0"/>
<rect x="266" y="138" width="1" height="2" fill="#e0e0e0"/>
<rect x="272" y="133" width="1" height="7" fill="#e0e0e0"/>
<rect x="278" y="138" width="1" height="2" fill="#e0e0e0"/>
<rect x="283" y="136" width="1" height="4" fill="#e0e0e0"/>
<rect x="289" y="138" width="1" height="2" fill="#e0e0e0"/>
<rect x="295" y="136" width="1" height="4" fill="#e0e0e0"/>
<rect x="301" y="138" width="1" height="2" fill="#e0e0e0"/>
<rect x="307" y="136" width="1" height="4" fill="#e0e0e0"/>
<rect x="313" y="138" width="1" height="2" fill="#e0e0e0"/>
<rect x="319" y="136" width="1" height="4" fill="#e0e0e0"/>
<rect x="325" y="138" width="1" height="2" fill="#e0e0e0"/>
<rect x="331" y="136" width="1" height="4" fill="#e0e0e0"/>
<rect x="337" y="138" width="1" height="2" fill="#e0e0e0"/>
<rect x="343" y="136" width="1" height="4" fill="#e0e0e0"/>
<rect x="349" y="138" width="1" height="2" fill="#e0e0e0"/>
<rect x="355" y="136" width="1" height="4" fill="#e0e0e0"/>
<rect x="361" y="138" width="1" height="2" fill="#e0e0e0"/>
<rect x="367" y="136" width="1" height="4" fill="#e0e0e0"/>
<rect x="373" y="138" width="1" height="2" fill="#e0e0e0"/>
<rect x="379" y="136" width="1" height="4" fill="#e0e0e0"/>
<rect x="385" y="138" width="1" height="2" fill="#e0e0e0"/>
<rect x="391" y="133" width="1" height="7" fill="#e0e0e0"/>
<rect x="397" y="138" width="1" height="2" fill="#e0e0e0"/>
<rect x="403" y="136" width="1" height="4" fill="#e0e0e0"/>
<rect x="408" y="138" width="1" height="2" fill="#e0e0e0"/>
<rect x="414" y="136" width="1" height="4" fill="#e0e0e0"/>
<rect x="420" y="138" width="1" height="2" fill="#e0e0e0"/>
<rect x="426" y="136" width="1" height="4" fill="#e0e0e0"/>
<rect x="432" y="138" width="1" height="2" fill="#e0e0e0"/>
<rect x="438" y="136" width="1" height="4" fill="#e0e0e0"/>
<rect x="444" y="138" width="1" height="2" fill="#e0e0e0"/>
<rect x="450" y="136" width="1" height="4" fill="#e0e0e0"/>
<rect x="456" y="138" width="1" height="2" fill="#e0e0e0"/>
<rect x="462" y="136" width="1" height="4" fill="#e0e0e0"/>
<rect x="468" y="138" width="1" height="2" fill="#e0e0e0"/>
<rect x="474" y="136" width="1" height="4" fill="#e0e0e0"/>
<rect x="480" y="138" width="1" height="2" fill="#e0e0e0"/>
<rect x="486" y="136" width="1" height="4" fill="#e0e0e0"/>
<rect x="492" y="138" width="1" height="2" fill="#e0e0e0"/>
<rect x="498" y="136" width="1" height="4" fill="#e0e0e0"/>
<rect x="504" y="138" width="1" height="2" fill="#e0e0e0"/>
<rect x="510" y="133" width="1" height="7" fill="#e0e0e0"/>
<rect x="516" y="138" width="1" height="2" fill="#e0e0e0"/>
<rect x="522" y="136" width="1" height="4" fill="#e0e0e0"/>
<rect x="528" y="138" width="1" height="2" fill="#e0e0e0"/>
<rect x="533" y="136" width="1" height="4" fill="#e0e0e0"/>
<rect x="539" y="138" width="1" height="2" fill="#e0e0e0"/>
<rect x="545" y="136" width="1" height="4" fill="#e0e0e0"/>
<rect x="551" y="138" width="1" height="2" fill="#e0e0e0"/>
<rect x="557" y="136" width="1" height="4" fill="#e0e0e0"/>
<rect x="563" y="138" width="1" height="2" fill="#e0e0e0"/>
<rect x="569" y="136" width="1" height="4" fill="#e0e0e0"/>
<rect x="575" y="138" width="1" height="2" fill="#e0e0e0"/>
<rect x="581" y="136" width="1" height="4" fill="#e0e0e0"/>
<rect x="587" y="138" width="1" height="2" fill="#e0e0e0"/>
<rect x="593" y="136" width="1" height="4" fill="#e0e0e0"/>
<rect x="599" y="138" width="1" height="2" fill="#e0e0e0"/>
<rect x="605" y="136" width="1" height="4" fill="#e0e0e0"/>
<rect x="611" y="138" width="1" height="2" fill="#e0e0e0"/>
<rect x="617" y="136" width="1" height="4" fill="#e0e0e0"/>
<rect x="623" y="138" width="1" height="2" fill="#e0e0e0"/>
<rect x="629" y="133" width="1" height="7" fill="#e0e0e0"/>
<rect x="635" y="138" width="1" height="2" fill="#e0e0e0"/>
<rect x="641" y="136" width="1" height="4" fill="#e0e0e0"/>
<rect x="647" y="138" width="1" height="2" fill="#e0e0e0"/>
<rect x="653" y="136" width="1" height="4" fill="#e0e0e0"/>
<rect x="658" y="138" width="1" height="2" fill="#e0e0e0"/>
<rect x="664" y="136" width="1" height="4" fill="#e0e0e0"/>
<rect x="670" y="138" width="1" height="2" fill="#e0e0e0"/>
<rect x="676" y="136" width="1" height="4" fill="#e0e0e0"/>
<rect x="682" y="138" width="1" height="2" fill="#e0e0e0"/>
<rect x="688" y="136" width="1" height="4" fill="#e0e0e0"/>
<rect x="694" y="138" width="1" height="2" fill="#e0e0e0"/>
<rect x="700" y="136" width="1" height="4" fill="#e0e0e0"/>
<rect x="706" y="138" width="1" height="2" fill="#e0e0e0"/>
<rect x="712" y="136" width="1" height="4" fill="#e0e0e0"/>
<rect x="718" y="138" width="1" height="2" fill="#e0e0e0"/>
<rect x="724" y="136" width="1" height="4" fill="#e0e0e0"/>
<rect x="730" y="138" width="1" height="2" fill="#e0e0e0"/>
<rect x="736" y="136" width="1" height="4" fill="#e0e0e0"/>
<rect x="742" y="138" width="1" height="2" fill="#e0e0e0"/>
<rect x="748" y="133" width="1" height="7" fill="#e0e0e0"/>
<text x="152.7" y="130.3" text-anchor="middle">67</text>
<text x="271.8" y="130.3" text-anchor="middle">68</text>
<text x="390.8" y="130.3" text-anchor="middle">69</text>
<text x="509.8" y="130.3" text-anchor="middle">70</text>
<text x="628.9" y="130.3" text-anchor="middle">71</text>
<text x="748.0" y="130.3" text-anchor="middle">72</text>
<rect x="55" y="142" width="2" height="1" fill="#e0e0e0"/>
<rect x="53" y="148" width="4" height="1" fill="#e0e0e0"/>
<rect x="55" y="154" width="2" height="1" fill="#e0e0e0"/>
<rect x="53" y="160" width="4" height="1" fill="#e0e0e0"/>
<rect x="55" y="166" width="2" height="1" fill="#e0e0e0"/>
<rect x="53" y="172" width="4" height="1" fill="#e0e0e0"/>
<rect x="55" y="178" width="2" height="1" fill="#e0e0e0"/>
<rect x="53" y="184" width="4" height="1" fill="#e0e0e0"/>
<rect x="55" y="190" width="2" height="1" fill="#e0e0e0"/>
<rect x="50" y="196" width="7" height="1" fill="#e0e0e0"/>
<rect x="55" y="201" width="2" height="1" fill="#e0e0e0"/>
<rect x="53" y="207" width="4" height="1" fill="#e0e0e0"/>
<rect x="55" y="213" width="2" height="1" fill="#e0e0e0"/>
<rect x="53" y="219" width="4" height="1" fill="#e0e0e0"/>
<rect x="55" y="225" width="2" height="1" fill="#e0e0e0"/>
<rect x="53" y="231" width="4" height="1" fill="#e0e0e0"/>
<rect x="55" y="237" width="2" height="1" fill="#e0e0e0"/>
<rect x="53" y="243" width="4" height="1" fill="#e0e0e0"/>
<rect x="55" y="249" width="2" height="1" fill="#e0e0e0"/>
<rect x="53" y="255" width="4" height="1" fill="#e0e0e0"/>
<rect x="55" y="261" width="2" height="1" fill="#e0e0e0"/>
<rect x="53" y="267" width="4" height="1" fill="#e0e0e0"/>
<rect x="55" y="273" width="2" height="1" fill="#e0e0e0"/>
<rect x="53" y="279" width="4" height="1" fill="#e0e0e0"/>
<rect x="55" y="285" width="2" height="1" fill="#e0e0e0"/>
<rect x="53" y="291" width="4" height="1" fill="#e0e0e0"/>
<rect x="55" y="297" width="2" height="1" fill="#e0e0e0"/>
<rect x="53" y="303" width="4" height="1" fill="#e0e0e0"/>
<rect x="55" y="309" width="2" height="1" fill="#e0e0e0"/>
<rect x="50" y="315" width="7" height="1" fill="#e0e0e0"/>
<rect x="55" y="321" width="2" height="1" fill="#e0e0e0"/>
<rect x="53" y="326" width="4" height="1" fill="#e0e0e0"/>
<rect x="55" y="332" width="2" height="1" fill="#e0e0e0"/>
<rect x="53" y="338" width="4" height="1" fill="#e0e0e0"/>
<rect x="55" y="344" width="2" height="1" fill="#e0e0e0"/>
<rect x="53" y="350" width="4" height="1" fill="#e0e0e0"/>
<rect x="55" y="356" width="2" height="1" fill="#e0e0e0"/>
<rect x="53" y="362" width="4" height="1" fill="#e0e0e0"/>
<rect x="55" y="368" width="2" height="1" fill="#e0e0e0"/>
<rect x="53" y="374" width="4" height="1" fill="#e0e0e0"/>
<rect x="55" y="380" width="2" height="1" fill="#e0e0e0"/>
<rect x="53" y="386" width="4" height="1" fill="#e0e0e0"/>
<rect x="55" y="392" width="2" height="1" fill="#e0e0e0"/>
<rect x="53" y="398" width="4" height="1" fill="#e0e0e0"/>
<rect x="55" y="404" width="2" height="1" fill="#e0e0e0"/>
<rect x="53" y="410" width="4" height="1" fill="#e0e0e0"/>
<rect x="55" y="416" width="2" height="1" fill="#e0e0e0"/>
<rect x="53" y="422" width="4" height="1" fill="#e0e0e0"/>
<rect x="55" y="428" width="2" height="1" fill="#e0e0e0"/>
<rect x="50" y="434" width="7" height="1" fill="#e0e0e0"/>
<rect x="55" y="440" width="2" height="1" fill="#e0e0e0"/>
<rect x="53" y="446" width="4" height="1" fill="#e0e0e0"/>
<rect x="55" y="451" width="2" height="1" fill="#e0e0e0"/>
<rect x="53" y="457" width="4" height="1" fill="#e0e0e0"/>
<rect x="55" y="463" width="2" height="1" fill="#e0e0e0"/>
<rect x="53" y="469" width="4" height="1" fill="#e0e0e0"/>
<rect x="55" y="475" width="2" height="1" fill="#e0e0e0"/>
<rect x="53" y="481" width="4" height="1" fill="#e0e0e0"/>
<rect x="55" y="487" width="2" height="1" fill="#e0e0e0"/>
<rect x="53" y="493" width="4" height="1" fill="#e0e0e0"/>
<rect x="55" y="499" width="2" height="1" fill="#e0e0e0"/>
<rect x="53" y="505" width="4" height="1" fill="#e0e0e0"/>
<rect x="55" y="511" width="2" height="1" fill="#e0e0e0"/>
<rect x="53" y="517" width="4" height="1" fill="#e0e0e0"/>
<rect x="55" y="523" width="2" height="1" fill="#e0e0e0"/>
<rect x="53" y="529" width="4" height="1" fill="#e0e0e0"/>
<rect x="55" y="535" width="2" height="1" fill="#e0e0e0"/>
<rect x="53" y="541" width="4" height="1" fill="#e0e0e0"/>
<rect x="55" y="547" width="2" height="1" fill="#e0e0e0"/>
<rect x="50" y="553" width="7" height="1" fill="#e0e0e0"/>
<rect x="55" y="559" width="2" height="1" fill="#e0e0e0"/>
<rect x="53" y="565" width="4" height="1" fill="#e0e0e0"/>
<rect x="55" y="571" width="2" height="1" fill="#e0e0e0"/>
<rect x="53" y="576" width="4" height="1" fill="#e0e0e0"/>
<rect x="55" y="582" width="2" height="1" fill="#e0e0e0"/>
<text transform="translate(47.6,195.7) rotate(-90)" text-anchor="middle">77</text>
<text transform="translate(47.6,314.8) rotate(-90)" text-anchor="middle">78</text>
<text transform="translate(47.6,433.8) rotate(-90)" text-anchor="middle">79</text>
<text transform="translate(47.6,552.9) rotate(-90)" text-anchor="middle">80</text>
<text x="39.5" y="134" font-size="9">mm</text>
<rect x="754" y="138" width="1" height="2" fill="#eee"/><rect x="760" y="136" width="1" height="4" fill="#eee"/>
</g>
</svg>

<!-- right panels -->
<div class="a" id="rp" style="left:762px;top:99px;width:262px;height:501px;background:#333"></div>
<!-- brush panel tab row -->
<div class="a" style="left:764px;top:100px;width:260px;height:20px;background:#2d2d2d"></div>
<div class="a" style="left:918px;top:101px;width:36px;height:19px;background:#3b3b3b;border-radius:2px 2px 0 0"></div>
<div class="a" style="left:771px;top:105.5px;width:1px;height:8px;background:#505050"></div>
<div class="a" style="left:774px;top:105.5px;width:1px;height:8px;background:#505050"></div>
<div class="ptab" style="left:786px;top:106px">カラー</div>
<div class="a" style="left:820px;top:105px;width:1px;height:10px;background:#4c4c4c"></div>
<div class="ptab" style="left:824.6px;top:106px">スウォッチ</div>
<div class="a" style="left:878px;top:105px;width:1px;height:10px;background:#4c4c4c"></div>
<div class="ptab" style="left:883px;top:106px">境界線</div>
<div class="ptab" style="left:921.5px;top:106px;color:#f2f2f2">ブラシ</div>
<div class="ptab" style="left:960.5px;top:106px;font-size:9.5px">外観</div>
<svg class="a" style="left:1007px;top:104px" width="15" height="12" viewBox="0 0 15 12"><path d="M1,2h8.5M1,4.4h8.5M1,6.8h8.5M1,9.2h8.5" stroke="#a8a8a8" stroke-width="1.3"/><path d="M10.6,8.4h3.4l-1.7,2.4z" fill="#d6d6d6"/></svg>
<!-- brush panel body -->
<div class="a" style="left:764px;top:120px;width:260px;height:25px;background:#3b3b3b"></div>
<div class="a" style="left:769.4px;top:124px;width:219.5px;height:18.5px;background:#323232;border:1px solid #242424;border-radius:3px"></div>
<div class="t" style="left:773.5px;top:129px;font-size:10.5px;color:#dedede">基本</div>
<svg class="a" style="left:978px;top:126px" width="8" height="15" viewBox="0 0 8 15"><path d="M1.6,5.4 L4,2.4 L6.4,5.4z M1.6,9.6 L4,12.6 L6.4,9.6z" fill="#d8d8d8"/></svg>
<svg class="a" style="left:1007px;top:126px" width="13" height="13" viewBox="0 0 13 13"><rect x="0.6" y="0.6" width="11.4" height="11.4" rx="1" fill="#f6f6f6" stroke="#111" stroke-width="1.2"/><path d="M3,3.4h6.6M3,5.4h6.6M3,7.4h6.6M3,9.4h6.6" stroke="#111" stroke-width="1"/></svg>
<!-- brush list -->
<div class="a" style="left:764px;top:144.5px;width:245.5px;height:197.5px;background:#2a2a2a"></div>
<div class="a" style="left:1009.5px;top:144.5px;width:14.5px;height:197.5px;background:#333"></div>
<div class="a" style="left:1013.5px;top:147.5px;width:7.5px;height:40px;border-radius:4px;background:#595959"></div>
<div class="a" style="left:764px;top:184px;width:245.5px;height:40px;background:#5f8ccb"></div>
<svg class="a" style="left:764px;top:144px" width="246" height="198" viewBox="764 144 246 198">
<g fill="none" stroke-linecap="round">
<path d="M813,164.6 C828,161 842,158.6 857,158.6 C890,158.6 915,169.9 947,169.9 C965,169.9 982,167 995.3,164.4" stroke="#b2b2b2" stroke-width="1.5"/>
<path d="M813,204.2 C828,200.6 842,198 857,198 C890,198 915,209.3 947,209.3 C965,209.3 982,206.6 995.3,204" stroke="#f4f6fa" stroke-width="0.8"/>
<path d="M813,243.4 C828,239.8 842,237.3 857,237.3 C890,237.3 915,248.6 947,248.6 C965,248.6 982,245.8 995.3,243.2" stroke="#f2f2f2" stroke-width="2.6"/>
<path d="M813.5,282.8 C828,279.2 842,276.8 857,276.8 C890,276.8 915,288.1 947,288.1 C965,288.1 982,285.2 994.5,282.6" stroke="#fff" stroke-width="7.2"/>
<path d="M813.5,322.2 C828,318.6 842,316.8 857,316.8 C890,316.8 915,328 947,328 C965,328 982,325.2 992.5,322.6" stroke="#fff" stroke-width="14"/>
</g>
<rect x="782.6" y="159.4" width="1" height="1" fill="#ccc"/>
<rect x="782.4" y="198.8" width="1.4" height="1" fill="#e8eefa"/>
<circle cx="783" cy="239" r="1.1" fill="#f4f4f4"/>
<circle cx="782.8" cy="278.6" r="3.6" fill="#fff"/>
<circle cx="783.1" cy="318" r="7" fill="#fff"/>
<g font-family="Liberation Sans, sans-serif" font-size="9.5" font-weight="bold" fill="#e2e2e2" text-anchor="middle">
<text x="781.6" y="181.7">1</text>
<text x="781.6" y="221.4" fill="#d4dcec">2</text>
<text x="781.6" y="260.8">4</text>
<text x="781.6" y="300.2">8</text>
<text x="781.6" y="339.4">16</text>
</g>
</svg>
<div class="a" style="left:764px;top:342px;width:260px;height:3px;background:#262626"></div>
<!-- layers panel -->
<div class="a" style="left:764px;top:345px;width:260px;height:21px;background:#2d2d2d"></div>
<div class="a" style="left:782.5px;top:346px;width:46.5px;height:20px;background:#3b3b3b;border-radius:2px 2px 0 0"></div>
<div class="a" style="left:771px;top:351.5px;width:1px;height:8px;background:#505050"></div>
<div class="a" style="left:774px;top:351.5px;width:1px;height:8px;background:#505050"></div>
<div class="ptab" style="left:786.5px;top:351.5px;color:#f2f2f2">レイヤー</div>
<div class="ptab" style="left:834px;top:351.5px">エフェ</div>
<div class="a" style="left:873px;top:351px;width:1px;height:10px;background:#4c4c4c"></div>
<div class="ptab" style="left:878.5px;top:351.5px">スタイ</div>
<div class="a" style="left:916.5px;top:351px;width:1px;height:10px;background:#4c4c4c"></div>
<div class="ptab" style="left:922px;top:351.5px">テキス</div>
<div class="a" style="left:961px;top:351px;width:1px;height:10px;background:#4c4c4c"></div>
<div class="ptab" style="left:966.5px;top:351.5px">ストッ</div>
<svg class="a" style="left:1007px;top:350px" width="15" height="12" viewBox="0 0 15 12"><path d="M1,2h8.5M1,4.4h8.5M1,6.8h8.5M1,9.2h8.5" stroke="#a8a8a8" stroke-width="1.3"/><path d="M10.6,8.4h3.4l-1.7,2.4z" fill="#d6d6d6"/></svg>
<div class="a" style="left:764px;top:366px;width:260px;height:29px;background:#3b3b3b"></div>
<div class="t" style="left:768.5px;top:376.5px;font-size:10px;color:#d6d6d6">不透明度:</div>
<div class="a" style="left:823.3px;top:371.5px;width:46.7px;height:18.5px;background:#2b2b2b;border:1px solid #242424;border-radius:3px"></div>
<div class="t" style="left:827px;top:377px;font-size:11.5px;letter-spacing:-0.25px;color:#ececec">100 %</div>
<div class="a" style="left:861.5px;top:379px;width:0;height:0;border-left:2.5px solid transparent;border-right:2.5px solid transparent;border-top:4px solid #ddd"></div>
<div class="a" style="left:873.7px;top:371.5px;width:106.3px;height:18.5px;background:#333;border:1px solid #242424;border-radius:3px"></div>
<div class="t" style="left:878.5px;top:377px;font-size:10px;color:#d2d2d2">標準</div>
<svg class="a" style="left:968.5px;top:373px" width="8" height="15" viewBox="0 0 8 15"><path d="M1.8,5.6 L4,2.8 L6.2,5.6z M1.8,9.4 L4,12.2 L6.2,9.4z" fill="#d8d8d8"/></svg>
<!-- gear + lock -->
<svg class="a" style="left:983px;top:374px" width="34" height="14" viewBox="0 0 34 14">
<g transform="translate(7,6.8)" fill="#cdcdcd">
<circle r="4.3"/>
<rect x="-1.2" y="-6" width="2.4" height="12"/><rect x="-1.2" y="-6" width="2.4" height="12" transform="rotate(45)"/><rect x="-1.2" y="-6" width="2.4" height="12" transform="rotate(90)"/><rect x="-1.2" y="-6" width="2.4" height="12" transform="rotate(135)"/>
<circle r="1.9" fill="#3b3b3b"/>
</g>
<rect x="22.8" y="6" width="8" height="6.6" rx="0.8" fill="#c4c4c4"/>
<path d="M24.5,6.2 v-2 a2.3,2.5 0 0 1 4.6,0 v2" stroke="#c4c4c4" stroke-width="1.4" fill="none"/>
</svg>
<!-- layer list -->
<div class="a" style="left:764px;top:395px;width:245.5px;height:183.5px;background:#2a2a2a"></div>
<div class="a" style="left:1009.5px;top:395px;width:14.5px;height:183.5px;background:#333"></div>
<div class="a" style="left:764px;top:395.2px;width:245.5px;height:31.6px;background:#4480cf"></div>
<div class="a" style="left:764px;top:427.6px;width:245.5px;height:31.4px;background:#343434"></div>
<div class="a" style="left:784.7px;top:396px;width:29.5px;height:29.5px;background:#2a2a2a;border:1px solid #0e0e0e"></div>
<div class="a" style="left:784.7px;top:428.7px;width:29.5px;height:29.5px;background:#2a2a2a;border:1px solid #0e0e0e"></div>
<svg class="a" style="left:784.7px;top:396px" width="30" height="63" viewBox="0 0 30 63">
<path transform="translate(1.2,0.6) scale(0.88)" d="M3.4,6.6 h15.6 v2.6 h-13 v8 h3.6 v-2.6 h7 v2.6 h4.2 v2.6 h4 v2.6 h-6.4 v-2.6 h-4.2 v-2.6 h-2.2 v2.6 h-3.6 v2.6 h-5z M23.4,24.6 h2.2 v2.2 h-2.2z" fill="#fff"/>
<path d="M15,58.6 C10,54.6 2.4,49 2.4,42.6 C2.4,38.6 5.4,36 8.8,36 C11.6,36 13.8,37.6 15,39.8 C16.2,37.6 18.4,36 21.2,36 C24.6,36 27.6,38.6 27.6,42.6 C27.6,49 20,54.6 15,58.6z" fill="#fe0a00"/>
</svg>
<div class="t" style="left:819.5px;top:405.6px;font-size:9.5px;color:#a9c6ee">(ピクセル)</div>
<div class="t" style="left:819.5px;top:438.4px;font-size:9.5px;color:#9a9a9a">(ピクセル)</div>
<div class="a" style="left:988.3px;top:403px;width:15px;height:15px;background:#3d3d3d;border:1px solid #2f4a70;border-radius:3px"></div>
<div class="a" style="left:988.3px;top:435.6px;width:15px;height:15px;background:#414141;border:1px solid #2a2a2a;border-radius:3px"></div>
<svg class="a" style="left:988.3px;top:403px" width="15" height="48" viewBox="0 0 15 48"><path d="M3.6,7.8 L6.2,11.2 L11.4,3.4" stroke="#fff" stroke-width="1.7" fill="none"/><path d="M3.6,40.4 L6.2,43.8 L11.4,36" stroke="#f0f0f0" stroke-width="1.7" fill="none"/></svg>
<!-- layers bottom toolbar -->
<div class="a" style="left:764px;top:578.4px;width:260px;height:21.6px;background:#3d3d3d"></div>
<div class="a" style="left:768px;top:578.4px;width:20.6px;height:21.6px;background:#313131"></div>
<svg class="a" style="left:764px;top:578px" width="260" height="22" viewBox="764 578 260 22">
<g fill="none" stroke="#bdbdbd" stroke-width="1.3" stroke-linejoin="round">
<path d="M771,589 l7.3,3 l7.3,-3 M771,592 l7.3,3 l7.3,-3"/>
</g>
<path d="M771,586 l7.3,-3 l7.3,3 l-7.3,3z" fill="#bdbdbd"/>
<rect x="845.6" y="583.6" width="14" height="11.4" fill="#cacaca"/>
<circle cx="852.6" cy="589.3" r="3.6" fill="#2e2e2e"/>
<circle cx="875" cy="589.4" r="5.6" fill="#cfcfcf"/>
<path d="M876.6,584.2 A5.4,5.4 0 0 0 871.6,593.6 z" fill="#3a3a3a"/>
<text x="889.2" y="594" font-family="Liberation Serif, serif" font-style="italic" font-size="13.5" fill="#cfcfcf">fx</text>
<path d="M961,584 h6 l3.6,3.6 v7 h-9.6z M967,584 v3.6 h3.6" fill="none" stroke="#d2d2d2" stroke-width="1.1"/>
<rect x="983.4" y="583.8" width="10.6" height="11" fill="#cfcfcf"/>
<g fill="#3a3a3a">
<rect x="985" y="585.2" width="1.6" height="1.6"/><rect x="988.2" y="585.2" width="1.6" height="1.6"/><rect x="991.4" y="585.2" width="1.6" height="1.6"/>
<rect x="986.6" y="586.8" width="1.6" height="1.6"/><rect x="989.8" y="586.8" width="1.6" height="1.6"/>
<rect x="985" y="588.4" width="1.6" height="1.6"/><rect x="988.2" y="588.4" width="1.6" height="1.6"/><rect x="991.4" y="588.4" width="1.6" height="1.6"/>
<rect x="986.6" y="590" width="1.6" height="1.6"/><rect x="989.8" y="590" width="1.6" height="1.6"/>
<rect x="985" y="591.6" width="1.6" height="1.6"/><rect x="988.2" y="591.6" width="1.6" height="1.6"/><rect x="991.4" y="591.6" width="1.6" height="1.6"/>
</g>
<path d="M1006,585.8 h9.6 M1009,585.6 v-1.6 h3.6 v1.6" stroke="#d0d0d0" stroke-width="1.2" fill="none"/>
<path d="M1006.8,587.2 h8 l-0.7,8 h-6.6z" fill="#d0d0d0"/>
<path d="M1009.2,588.6 v5 M1010.8,588.6 v5 M1012.4,588.6 v5" stroke="#3a3a3a" stroke-width="0.7"/>
</svg>


<svg class="a" style="left:0;top:0;pointer-events:none" width="1024" height="620" viewBox="0 0 1024 620">
<defs><filter id="sh" x="-20%" y="-20%" width="140%" height="150%"><feGaussianBlur in="SourceAlpha" stdDeviation="1"/><feOffset dx="0.5" dy="1.2"/><feComponentTransfer><feFuncA type="linear" slope="0.45"/></feComponentTransfer><feMerge><feMergeNode/><feMergeNode in="SourceGraphic"/></feMerge></filter></defs>
<!-- mouse cursor on canvas -->
<path d="M483.5,356.5 L483.5,370.3 L486.6,367.4 L488.8,372.4 L491,371.4 L488.8,366.6 L493,366.4 Z" fill="#111" stroke="#fff" stroke-width="1" stroke-linejoin="round"/>
<!-- annotation: pink box + arrows -->
<rect x="3.7" y="311.5" width="31" height="29" fill="none" stroke="#fb2c6a" stroke-width="3"/>
<g filter="url(#sh)" fill="#fb2c6a">
<path d="M40.5,320.5 L55.1,304.9 L55.4,310.7 L82.1,303.4 C83.6,303.2 84.6,304.2 84.4,305.4 C84.2,306.2 83.8,306.6 83,306.8 L59,318.7 L61.6,322.8 Z"/>
<path d="M775.6,204.5 L739.5,190.8 L742.9,200.8 C725,205 708,208.5 693.6,211 C692.3,211.4 692.3,213 693.6,213.2 C712,213.4 730,213.2 744.1,215 L742.7,225 Z"/>
</g>

</svg>
<!-- status bar -->
<div class="a" style="left:0;top:600px;width:1024px;height:20px;background:#323232"></div>
<div class="t" id="status" style="left:18px;top:605.5px;font-size:10px;color:#d6d6d6"><b id="s1">ドラッグ</b>で描画を開始します。<b id="s2">クリック</b><b class="pl">+</b><b class="k" style="width:13px"><i style="display:inline-block;font-style:normal;transform:scale(1.55,1.15) translateY(0.3px)">⇧</i></b><span id="s3">で</span>直前のストロークを続行します。<b id="s4">ドラッグ</b><b class="pl">+</b><b class="k" style="width:13px"><i style="display:inline-block;font-style:normal;transform:scale(1.55,1.15) translateY(0.3px)">⇧</i></b><span id="s5">で</span>ストロークを固定します。<b id="s6">ドラッグ</b><b class="pl">+</b><b class="k" style="width:11px">⌘</b><span id="s7">で</span>消去します。<b id="s8">ドラッグ</b><b class="pl">+</b><b class="k" style="width:11.5px">⌥</b><span id="s9">で</span>カラーピッカーを使用します。</div>
</div>
</body>
</html>
